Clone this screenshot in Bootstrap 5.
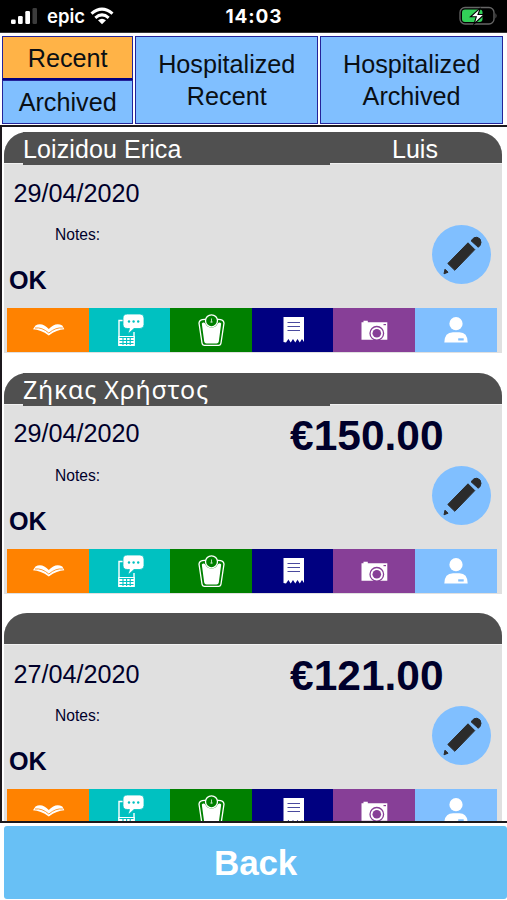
<!DOCTYPE html>
<html lang="en">
<head>
<meta charset="utf-8">
<meta name="viewport" content="width=device-width, initial-scale=1">
<title>Visits</title>
<link href="https://cdn.jsdelivr.net/npm/bootstrap@5.3.0/dist/css/bootstrap.min.css" rel="stylesheet">
<style>
body{font-family:"Liberation Sans",Arial,sans-serif;color:#00002b;height:900px;background:#fff}
.status{height:33px;background:#000;color:#fff;padding:0 9px 0 7px;border-bottom:1px solid #333;font-family:Inter,sans-serif}
.status .side{width:120px}
.carrier{font-size:18.5px;font-weight:600;line-height:32px;margin:0 5px 0 10px}
.clock{font-size:19px;font-weight:700;letter-spacing:.9px;line-height:33px;padding-left:3px}
.tabs{height:92px;padding:3px 4px 1px 2px;gap:2px}
.tab-btn{background:#80bfff;border:1.5px solid #24249a;border-radius:0;color:#0a0f14;font-size:25.2px;line-height:32px;padding:0}
.tab-btn.on{background:#ffb347;border-bottom:2px solid #000080}
.stack{width:131.500px}
.stack .tab-btn{line-height:43px;height:44px}
.stack .tab-btn.on{line-height:42px}
.wide{width:183px}
.feed{height:698px;border:2px solid #1c181c;border-right:0;padding:5px 5px 0 2px}
.visit{height:221px;margin-bottom:19.7px;background:#e0e0e0;border-radius:23px 23px 0 0}
.visit-head{height:32px;background:#505050;color:#fff;border-radius:23px 23px 0 0;font-size:25px;line-height:34px;border-bottom:1px solid #f0f0f0}
.who{width:307px;height:33px;margin-left:19px;background:#505050;letter-spacing:.1px}
.greek{font-family:"Noto Sans",sans-serif;font-size:25px;letter-spacing:.75px;line-height:32px}
.doctor{width:170px}
.visit-top{height:59px;padding-left:9.500px}
.date{font-size:25.2px;width:276.500px}
.amount{font-size:42.5px;line-height:60px;padding-top:3px}
.visit-mid{height:85px;padding-right:11px}
.notes{font-size:15.6px;line-height:24px;margin-left:51px}
.result{font-size:25.2px;line-height:30px;margin:18px 0 0 5px}
.edit{width:59px;height:59px;background:#80bfff;margin-top:2px}
.acts{height:44px;margin:0 5px 0 3px}
.acts button{width:82px;border-radius:0;padding:0;color:#fff}
.acts button:nth-child(2),.acts button:nth-child(4){width:81px}
.acts svg{display:block;width:44px;height:44px;margin:auto}
.c-book{background:#ff8200}.c-sms{background:#00c1c1}.c-scale{background:#008000}
.c-bill{background:#000080}.c-photo{background:#873f97}.c-user{background:#80bfff}
.back-btn{height:73px;margin:3px 0 0 4px;background:#68c0f5;color:#fff;border-radius:3px;font-size:35px;line-height:72px;padding:0;letter-spacing:-.2px}
</style>
<script src="https://cdn.jsdelivr.net/npm/bootstrap@5.3.0/dist/js/bootstrap.bundle.min.js"></script>
</head>
<body class="d-flex flex-column overflow-hidden">
<svg class="d-none" xmlns="http://www.w3.org/2000/svg">
 <symbol id="book" viewBox="0 0 44 44">
  <path fill="#fff" d="M9.500 17.500Q16 13.800 22.800 21Q29.500 13.800 36.300 17.500L38.300 21.300Q31 21.500 22.800 27.500Q14.500 21.500 7 21.300Z"/>
  <path fill="none" stroke="#ff8200" stroke-width=".8" d="M9 20Q16 19 22.800 25Q30 19 36.800 20"/>
 </symbol>
 <symbol id="sms" viewBox="0 0 44 44">
  <path fill="none" stroke="#fff" stroke-width="1.4" d="M15 12.500H11V37H26V24"/>
  <path fill="#fff" d="M10.300 28H26.700V38H10.300Z"/>
  <path stroke="#00c1c1" stroke-width="1.100" d="M11.500 29.500H25.500M11.500 32.500H25.500M11.500 35.500H25.500M15 29V37M18.600 29V37M22.200 29V37"/>
  <path fill="#fff" stroke="#00c1c1" stroke-width=".8" d="M19.500 6H32Q36 6 36 10V16.500Q36 20.500 32 20.500H26L20 26L21.500 20.500H19.500Q15 20.500 15 16.500V10Q15 6 19.500 6Z"/>
  <g fill="#00c1c1"><circle cx="21" cy="13.500" r="1.200"/><circle cx="25.600" cy="13.500" r="1.200"/><circle cx="30.200" cy="13.500" r="1.200"/></g>
 </symbol>
 <symbol id="scale" viewBox="0 0 44 44">
  <path fill="none" stroke="#fff" stroke-width="1.300" d="M17 11.500Q10.500 11 10 15L13 35Q13.300 37.300 15.500 37.300H29.500Q31.700 37.300 32 35L35 15Q34.500 11 28 11.500"/>
  <path fill="#fff" d="M12.800 15.500Q14.500 13.500 16.300 15.500Q18 19.500 22.500 19.500Q27 19.500 28.700 15.500Q30.500 13.500 32.200 15.500L29.800 33.500Q29.500 35.500 27.500 35.500H17.500Q15.500 35.500 15.200 33.500Z"/>
  <circle cx="22.500" cy="12.800" r="6" fill="#008000" stroke="#fff" stroke-width="1.300"/>
  <path stroke="#b5dab5" stroke-width="1" d="M22.500 10.500V14.500M21.300 14H23.700"/>
 </symbol>
 <symbol id="bill" viewBox="0 0 44 44">
  <path fill="#fff" d="M12.500 9H33V34L31 31L28.800 34.500L26.500 31L24.300 34.500L22 31L19.700 34.500L17.400 31L15 34.500L12.500 34Z"/>
  <path stroke="#4a4a9e" stroke-width="1.100" d="M16.500 14.500H29M16.500 18.500H29M16.500 22.500H29"/>
 </symbol>
 <symbol id="photo" viewBox="0 0 44 44">
  <path fill="#fff" d="M9.500 14.300H11.500V12.700H15.800V14.300H35.300V31.700H9.500Z"/>
  <circle cx="24.800" cy="25.300" r="6.800" fill="#fff" stroke="#873f97" stroke-width="1.300"/>
  <circle cx="24.800" cy="25.300" r="4.300" fill="#873f97"/>
  <rect x="31.500" y="16" width="2.500" height="1.200" fill="#873f97"/>
 </symbol>
 <symbol id="user" viewBox="0 0 44 44">
  <circle cx="22" cy="15.700" r="6.600" fill="#fff"/>
  <path fill="#fff" d="M10.300 34.500Q10.500 24.300 19 24.300H25.500Q33.500 24.300 33.700 34.500Z"/>
  <rect x="24.200" y="30.300" width="5.500" height="2.200" fill="#80bfff"/>
 </symbol>
 <symbol id="pencil" viewBox="0 0 59 59">
  <g fill="#2b2b2b" stroke="#2b2b2b" stroke-width="1" stroke-linejoin="round">
   <path d="M36 17.800L42.800 24.600L22.800 45.300L15.800 38.500Z"/>
   <path d="M39 15.700L42 12.800Q45 11 48 14Q50 17.500 48 20.500L46.300 22.300Z"/>
   <path d="M13 44.200L16 47.200L12 48.800Z"/>
  </g>
 </symbol>
</svg>

<header class="status d-flex justify-content-between align-items-center flex-shrink-0">
 <div class="side d-flex align-items-center">
  <svg width="30" height="18" viewBox="0 0 30 18"><g fill="#fff"><rect x="4" y="12.500" width="4.700" height="4.500" rx="1.300"/><rect x="11" y="9" width="4.700" height="8" rx="1.300"/><rect x="18.300" y="4" width="4.700" height="13" rx="1.300"/></g><rect x="25.500" y="1" width="4.500" height="16" rx="1.300" fill="#3c3c3c"/></svg>
  <span class="carrier">epic</span>
  <svg width="24" height="18" viewBox="0 0 24 18"><g fill="none" stroke="#fff" stroke-width="3"><path d="M1.500 6.700Q12 -2.500 22.500 6.700"/><path d="M5.300 10.800Q12 5 18.700 10.800"/></g><path fill="#fff" d="M12 17.300L8 13.200Q12 10.200 16 13.200Z"/></svg>
 </div>
 <span class="clock">14:03</span>
 <div class="side d-flex justify-content-end">
  <svg width="39" height="20" viewBox="0 0 39 20"><rect x="1" y="1.500" width="34" height="16.500" rx="5" fill="none" stroke="#666" stroke-width="1.300"/><rect x="3" y="3.500" width="20.500" height="12.500" rx="3" fill="#32d158"/><path d="M36.500 7V12.500Q38.500 9.800 36.500 7" fill="#666"/><path d="M21.500 1.800L11.500 10.800H17.300L15 18L25.300 8.500H19Z" fill="#fff" stroke="#000" stroke-width="1.100"/></svg>
 </div>
</header>

<nav class="tabs d-flex flex-shrink-0">
 <div class="stack d-flex flex-column">
  <button class="btn tab-btn on">Recent</button>
  <button class="btn tab-btn">Archived</button>
 </div>
 <button class="btn tab-btn wide">Hospitalized<br>Recent</button>
 <button class="btn tab-btn wide">Hospitalized<br>Archived</button>
</nav>

<main class="feed overflow-hidden flex-shrink-0">
 <article class="visit">
  <div class="visit-head d-flex"><div class="who">Loizidou Erica</div><div class="doctor text-center">Luis</div></div>
  <div class="visit-top d-flex align-items-center"><span class="date">29/04/2020</span></div>
  <div class="visit-mid d-flex justify-content-between align-items-start">
   <div><div class="notes">Notes:</div><div class="result fw-bold">OK</div></div>
   <button class="edit btn rounded-circle p-0 border-0"><svg class="d-block" width="59" height="59"><use href="#pencil"/></svg></button>
  </div>
  <div class="acts d-flex"><button class="btn border-0 c-book"><svg><use href="#book"/></svg></button><button class="btn border-0 c-sms"><svg><use href="#sms"/></svg></button><button class="btn border-0 c-scale"><svg><use href="#scale"/></svg></button><button class="btn border-0 c-bill"><svg><use href="#bill"/></svg></button><button class="btn border-0 c-photo"><svg><use href="#photo"/></svg></button><button class="btn border-0 c-user"><svg><use href="#user"/></svg></button></div>
 </article>
 <article class="visit">
  <div class="visit-head d-flex"><div class="who greek">Ζήκας Χρήστος</div></div>
  <div class="visit-top d-flex align-items-center"><span class="date">29/04/2020</span><span class="amount fw-bold">€150.00</span></div>
  <div class="visit-mid d-flex justify-content-between align-items-start">
   <div><div class="notes">Notes:</div><div class="result fw-bold">OK</div></div>
   <button class="edit btn rounded-circle p-0 border-0"><svg class="d-block" width="59" height="59"><use href="#pencil"/></svg></button>
  </div>
  <div class="acts d-flex"><button class="btn border-0 c-book"><svg><use href="#book"/></svg></button><button class="btn border-0 c-sms"><svg><use href="#sms"/></svg></button><button class="btn border-0 c-scale"><svg><use href="#scale"/></svg></button><button class="btn border-0 c-bill"><svg><use href="#bill"/></svg></button><button class="btn border-0 c-photo"><svg><use href="#photo"/></svg></button><button class="btn border-0 c-user"><svg><use href="#user"/></svg></button></div>
 </article>
 <article class="visit">
  <div class="visit-head"></div>
  <div class="visit-top d-flex align-items-center"><span class="date">27/04/2020</span><span class="amount fw-bold">€121.00</span></div>
  <div class="visit-mid d-flex justify-content-between align-items-start">
   <div><div class="notes">Notes:</div><div class="result fw-bold">OK</div></div>
   <button class="edit btn rounded-circle p-0 border-0"><svg class="d-block" width="59" height="59"><use href="#pencil"/></svg></button>
  </div>
  <div class="acts d-flex"><button class="btn border-0 c-book"><svg><use href="#book"/></svg></button><button class="btn border-0 c-sms"><svg><use href="#sms"/></svg></button><button class="btn border-0 c-scale"><svg><use href="#scale"/></svg></button><button class="btn border-0 c-bill"><svg><use href="#bill"/></svg></button><button class="btn border-0 c-photo"><svg><use href="#photo"/></svg></button><button class="btn border-0 c-user"><svg><use href="#user"/></svg></button></div>
 </article>
</main>
<button class="btn back-btn fw-bold border-0 flex-shrink-0">Back</button>
</body>
</html>
